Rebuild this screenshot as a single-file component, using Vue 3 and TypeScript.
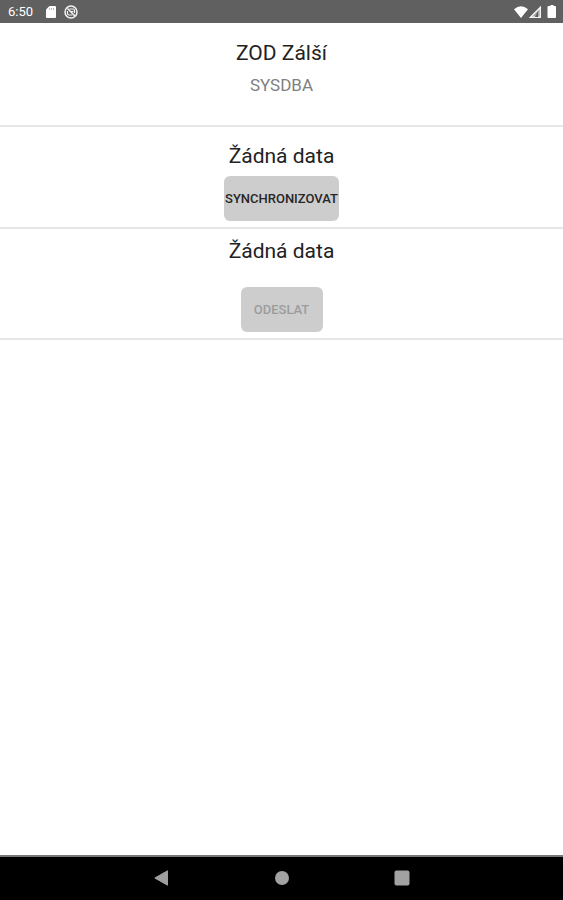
<script setup lang="ts">
import { ref } from 'vue'

const company = ref('ZOD Zálší')
const user = ref('SYSDBA')
const downloadStatus = ref('Žádná data')
const uploadStatus = ref('Žádná data')
const canUpload = ref(false)
</script>

<template>
  <div class="screen">
    <header class="status-bar">
      <span class="clock">6:50</span>
      <svg class="sd" width="10" height="12" viewBox="0 0 10 12" aria-hidden="true">
        <path d="M3.5 0H9a1 1 0 0 1 1 1v10a1 1 0 0 1-1 1H1a1 1 0 0 1-1-1V3.500z" fill="#fff" />
        <path d="M3.500 2v2M5.500 2v2M7.500 2v2" stroke="#aaa" stroke-width="0.8" />
      </svg>
      <svg class="sync" width="14" height="14" viewBox="0 0 14 14" fill="none" stroke="#f2f2f2" aria-hidden="true">
        <circle cx="7" cy="7" r="6" stroke-width="1.500" />
        <path d="M3.500 3.500l7.500 7.500" stroke-width="1.500" />
        <path d="M5.500 4h3.500a1.500 1.500 0 0 1 1.500 1.500V8M8.500 10H5a1.500 1.500 0 0 1-1.500-1.500V6M7 6.500h2.500" stroke-width="1.200" />
      </svg>
      <span class="spacer"></span>
      <svg width="42" height="14" viewBox="0 0 42 14" aria-hidden="true">
        <path d="M0 4.200Q7 -1.800 14 4.200L7 13z" fill="#fff" />
        <path d="M27 1v12H15z" fill="#a4a4a4" />
        <path d="M26.300 2.500v9.800H16.500z" fill="none" stroke="#f4f4f4" stroke-width="1.400" />
        <path d="M24 6v6h-3z" fill="#606060" />
        <path d="M34.500 1h2V0h3v1h1.500a1 1 0 0 1 1 1v10a1 1 0 0 1-1 1h-6.500a1 1 0 0 1-1-1V2a1 1 0 0 1 1-1z" fill="#fff" />
      </svg>
    </header>

    <main class="content">
      <section class="panel account">
        <h1 class="title">{{ company }}</h1>
        <p class="user">{{ user }}</p>
      </section>
      <section class="panel download">
        <h2 class="title">{{ downloadStatus }}</h2>
        <button class="action wide" type="button">SYNCHRONIZOVAT</button>
      </section>
      <section class="panel upload">
        <h2 class="title">{{ uploadStatus }}</h2>
        <button class="action" type="button" :disabled="!canUpload">ODESLAT</button>
      </section>
    </main>

    <nav class="nav-bar">
      <button class="nav-button" type="button" aria-label="Zpět">
        <svg width="16" height="16" viewBox="0 0 16 16"><path d="M13.500 0.800v14.400L0.800 8z" fill="#9e9e9e" stroke="#9e9e9e" stroke-linejoin="round" /></svg>
      </button>
      <button class="nav-button" type="button" aria-label="Domů">
        <svg width="16" height="16" viewBox="0 0 16 16"><circle cx="8" cy="8" r="7" fill="#a2a2a2" /></svg>
      </button>
      <button class="nav-button" type="button" aria-label="Poslední aplikace">
        <svg width="16" height="16" viewBox="0 0 16 16"><rect x="0.500" y="0.500" width="15" height="15" rx="2" fill="#a2a2a2" /></svg>
      </button>
    </nav>
  </div>
</template>

<style>
body {
  margin: 0;
  background: #fff;
}
</style>

<style scoped>
.screen {
  display: flex;
  flex-direction: column;
  min-height: 100vh;
  background: #fff;
  font-family: Roboto, "Liberation Sans", sans-serif;
}

.status-bar {
  display: flex;
  align-items: center;
  box-sizing: border-box;
  height: 23px;
  padding: 1px 7px 0 8px;
  background: #606060;
  color: #fff;
}

.clock {
  font-size: 13px;
  line-height: 22px;
}

.sd {
  margin-left: 13px;
}

.sync {
  margin-left: 8px;
}

.spacer {
  flex: 1;
}

.content {
  flex: 1;
}

.panel {
  display: flex;
  flex-direction: column;
  align-items: center;
  border-bottom: 2px solid #e6e6e6;
}

.account {
  padding: 18px 0 28px;
  gap: 8px;
}

.download {
  padding: 17px 0 6px;
  gap: 8px;
}

.upload {
  padding: 10px 0 6px;
  gap: 24px;
}

.title {
  margin: 0;
  color: #222;
  font-size: 21px;
  font-weight: 400;
  line-height: 24px;
}

.user {
  margin: 0;
  color: #808080;
  font-size: 17px;
  line-height: 24px;
}

.action {
  min-width: 82px;
  height: 45px;
  padding: 0;
  border: 0;
  border-radius: 6px;
  background: #cdcdcd;
  color: #262626;
  font-family: inherit;
  font-size: 13px;
  font-weight: 500;
}

.wide {
  min-width: 115px;
}

.action:disabled {
  color: #9c9c9c;
}

.nav-bar {
  display: flex;
  justify-content: center;
  gap: 72px;
  box-sizing: border-box;
  height: 45px;
  padding-bottom: 2px;
  border-top: 2px solid #777;
  background: #000;
}

.nav-button {
  display: flex;
  align-items: center;
  justify-content: center;
  width: 48px;
  padding: 0;
  border: 0;
  background: none;
}
</style>
